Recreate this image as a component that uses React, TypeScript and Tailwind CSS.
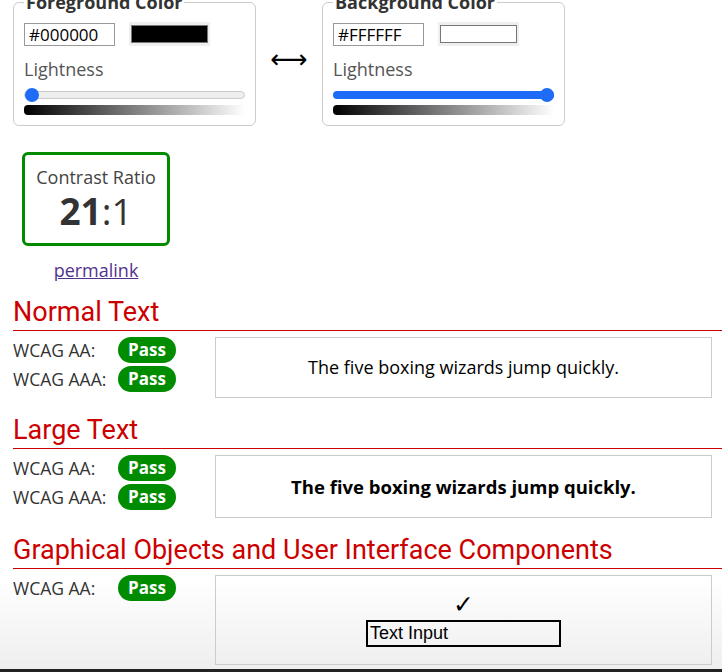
export default function App() {
  return (
    <div className="h-[672px] overflow-hidden flex flex-col bg-[linear-gradient(to_bottom,#ffffff_0%,#ffffff_86%,#efefef_99%)] font-['Open_Sans',sans-serif] text-[#333]">
      <div className="-mt-[10px] pl-[13px]">
        <div className="flex items-center">
          <Picker legend="Foreground Color" hex="#000000" dark />
          <div className="w-[66px] text-center text-[26px] leading-none text-black font-['DejaVu_Sans',sans-serif] mt-[2px]">⟷</div>
          <Picker legend="Background Color" hex="#FFFFFF" />
        </div>

        <div className="mt-[26px] ml-[9px] w-[148px] flex flex-col items-center">
          <div className="w-[148px] h-[94px] rounded-md border-[3px] border-[#008a00] flex flex-col items-center justify-center">
            <div className="text-[18px] leading-[24px] text-[#444]">Contrast Ratio</div>
            <div className="text-[37px] leading-[44px] text-[#333]">
              <span className="font-bold">21</span>:1
            </div>
          </div>
          <a href="#" className="mt-[12px] text-[18px] leading-[24px] text-[#52338c] underline">
            permalink
          </a>
        </div>

        <Heading first>Normal Text</Heading>
        <Rows labels={['WCAG AA:', 'WCAG AAA:']}>
          <div className="h-[61px] border border-[#ccc] flex items-center justify-center text-[18px] text-black">
            The five boxing wizards jump quickly.
          </div>
        </Rows>

        <Heading>Large Text</Heading>
        <Rows labels={['WCAG AA:', 'WCAG AAA:']}>
          <div className="h-[63px] border border-[#ccc] flex items-center justify-center text-[18.5px] font-bold text-black">
            The five boxing wizards jump quickly.
          </div>
        </Rows>

        <Heading>Graphical Objects and User Interface Components</Heading>
        <Rows labels={['WCAG AA:']}>
          <div className="h-[90px] border border-[#ccc] flex flex-col items-center justify-center">
            <div className="text-[25px] leading-[24px] font-bold text-black font-['DejaVu_Sans',sans-serif]">✓</div>
            <div className="mt-[3px] w-[195px] h-[27px] border-2 border-black flex items-center px-[2px] text-[18px] text-black font-['Liberation_Sans',sans-serif]">
              Text Input
            </div>
          </div>
        </Rows>
      </div>
      <div className="mt-auto h-[3px] bg-[#222]" />
    </div>
  );
}

function Picker({ legend, hex, dark }: { legend: string; hex: string; dark?: boolean }) {
  return (
    <fieldset className="w-[243px] rounded-md border border-[#ccc] px-[10px] pb-[10px]">
      <legend className="px-[2px] text-[18px] font-bold leading-[24px] text-[#333]">{legend}</legend>
      <div className="mt-[8px] flex items-center gap-[14px]">
        <div className="w-[91px] h-[23px] border border-[#999] px-[4px] text-[17px] leading-[21px] text-black">{hex}</div>
        <div className="w-[81px] h-[24px] bg-[#efefef] flex items-center justify-center">
          <div className={dark ? 'w-[77px] h-[18px] border border-[#777] bg-black' : 'w-[77px] h-[18px] border border-[#777] bg-white'} />
        </div>
      </div>
      <div className="mt-[11px] text-[18px] leading-[24px] text-[#555]">Lightness</div>
      <div className="mt-[7px] relative h-[14px] flex items-center">
        <div
          className={
            dark
              ? 'w-full h-[8px] rounded-full bg-[#eee] border border-[#ccc]'
              : 'w-full h-[8px] rounded-full bg-[#1e6cf5]'
          }
        />
        <div className={dark ? 'absolute left-[1px] top-0 w-[14px] h-[14px] rounded-full bg-[#1e6cf5]' : 'absolute right-0 top-0 w-[14px] h-[14px] rounded-full bg-[#1e6cf5]'} />
      </div>
      <div className="mt-[3px] h-[10px] rounded-l-[4px] bg-[linear-gradient(to_right,#000,#fff)]" />
    </fieldset>
  );
}

function Heading({ children, first }: { children: React.ReactNode; first?: boolean }) {
  return (
    <h2
      className={
        first
          ? 'mt-[14px] border-b border-[#cc0000] pb-[2px] text-[27px] leading-[32px] text-[#cc0000] font-["Roboto",sans-serif]'
          : 'mt-[16px] border-b border-[#cc0000] pb-[2px] text-[27px] leading-[32px] text-[#cc0000] font-["Roboto",sans-serif]'
      }
    >
      {children}
    </h2>
  );
}

function Rows({ labels, children }: { labels: string[]; children: React.ReactNode }) {
  return (
    <div className="mt-[6px] flex pr-[10px]">
      <div className="w-[202px] flex flex-col gap-[3px]">
        {labels.map((label, i) => (
          <div key={i} className="flex items-center h-[26px]">
            <div className="w-[105px] text-[17.5px] text-[#333]">{label}</div>
            <div className="w-[58px] h-[26px] rounded-full bg-[#008c00] flex items-center justify-center text-[17px] font-bold text-white">
              Pass
            </div>
          </div>
        ))}
      </div>
      <div className="flex-1">{children}</div>
    </div>
  );
}
